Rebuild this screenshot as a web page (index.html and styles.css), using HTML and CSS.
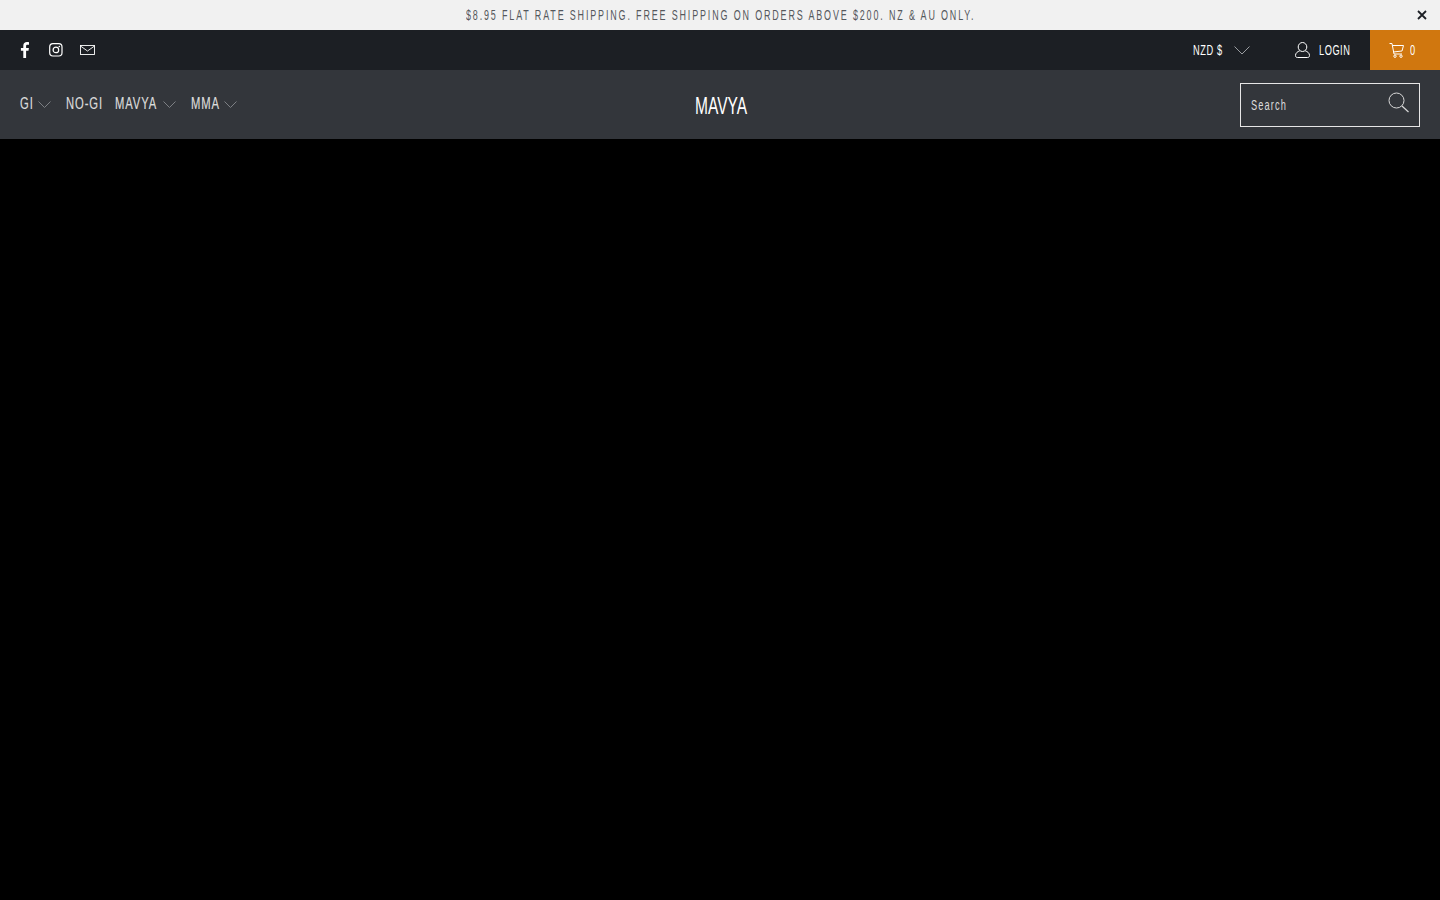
FILE: index.html
```html
<!DOCTYPE html>
<html lang="en">
<head>
    <meta charset="UTF-8">
    <title>Mavya</title>
    <meta name="viewport" content="width=device-width, initial-scale=1.0">
    <link rel="stylesheet" href="styles.css">
</head>
<body>
    <!-- Promo banner -->
    <div class="promo-banner">
        <p class="tall promo-text">$8.95 FLAT RATE SHIPPING. FREE SHIPPING ON ORDERS ABOVE $200. NZ &amp; AU ONLY.</p>
        <button class="promo-close" aria-label="Close">
            <svg width="10" height="10" viewBox="0 0 10 10"><path d="M1 1l8 8M9 1l-8 8" stroke="#1d2025" stroke-width="1.800" fill="none"/></svg>
        </button>
    </div>

    <!-- Top bar -->
    <div class="top-bar">
        <div class="social-icons">
            <a href="#" aria-label="Facebook">
                <svg width="12" height="16" viewBox=".7 0 12 16"><path d="M6.800 16V8.800h2.400l.4-2.800H6.800V4.200c0-.8.200-1.400 1.400-1.400h1.500V.3C9.400.2 8.600.1 7.600.1 5.500.1 4 1.400 4 3.800V6H1.600v2.800H4V16z" fill="#fff"/></svg>
            </a>
            <a href="#" aria-label="Instagram">
                <svg width="14" height="14" viewBox="0 0 14 14" fill="none" stroke="#fff"><rect x=".7" y=".7" width="12.300" height="12.300" rx="3.200" stroke-width="1.200"/><circle cx="6.900" cy="6.900" r="2.800" stroke-width="1.200"/><circle cx="10.300" cy="3.500" r=".8" fill="#fff" stroke="none"/></svg>
            </a>
            <a href="#" aria-label="Email">
                <svg width="15" height="10" viewBox="0 0 15 10" fill="none" stroke="#fff" stroke-width=".9"><rect x=".5" y=".5" width="14" height="9"/><path d="M.5 1l7 5 7-5"/></svg>
            </a>
        </div>
        <div class="top-actions">
            <a href="#" class="currency">
                <span class="tall currency-text">NZD $</span>
                <svg width="16" height="9" viewBox="0 0 16 9"><path d="M.5 .5L8 8l7.500-7.500" fill="none" stroke="#9a9da1"/></svg>
            </a>
            <a href="#" class="login">
                <svg width="15" height="16" viewBox="0 0 15 16" fill="none" stroke="#fff" stroke-width="1"><ellipse cx="7.500" cy="5" rx="4.300" ry="4.500"/><path d="M4.800 8.800C2.500 9.600.5 11 .5 13.500c0 1.300.7 2 2 2h10c1.300 0 2-.7 2-2 0-2.500-2-3.900-4.300-4.700"/></svg>
                <span class="tall login-text">LOGIN</span>
            </a>
            <a href="#" class="cart">
                <svg width="15" height="15" viewBox="0 0 15 15" fill="none" stroke="#fff" stroke-width="1"><path d="M.5 .5h2.500L5 11h8M3.400 2.500H14.500L13 8l-8.700 1"/><circle cx="6" cy="13.200" r="1.200"/><circle cx="12" cy="13.200" r="1.200"/></svg>
                <span class="tall cart-text">0</span>
            </a>
        </div>
    </div>

    <!-- Main nav -->
    <div class="main-nav">
        <ul class="nav-links">
            <li><a href="#"><span class="tall nav-gi">GI</span> <svg width="13" height="7" viewBox="0 0 13 7"><path d="M.5 .5l6 6 6-6" fill="none" stroke="#7d8084"/></svg></a></li>
            <li><a href="#"><span class="tall nav-nogi">NO-GI</span></a></li>
            <li><a href="#"><span class="tall nav-mavya">MAVYA</span> <svg width="13" height="7" viewBox="0 0 13 7"><path d="M.5 .5l6 6 6-6" fill="none" stroke="#7d8084"/></svg></a></li>
            <li><a href="#"><span class="tall nav-mma">MMA</span> <svg width="13" height="7" viewBox="0 0 13 7"><path d="M.5 .5l6 6 6-6" fill="none" stroke="#7d8084"/></svg></a></li>
        </ul>
        <a href="#" class="logo"><span class="tall logo-text">MAVYA</span></a>
        <form class="search-box">
            <input type="text" placeholder="Search">
            <svg width="21" height="21" viewBox="0 0 21 21" fill="none" stroke="#d8d8d8" stroke-width="1"><circle cx="8.500" cy="8.500" r="7.500"/><path d="M14 14l6.500 6" stroke-width="1.200"/></svg>
        </form>
    </div>

    <!-- Hero (empty video area) -->
    <div class="hero"></div>
</body>
</html>
```

FILE: styles.css
```css
body {
    margin: 0;
    font-family: "Liberation Sans", Arial, sans-serif;
    background: #000;
    height: 900px;
    overflow: hidden;
}
a { color: inherit; text-decoration: none; }

/* no condensed font installed, so squeeze the text sideways */
.tall {
    display: inline-block;
    white-space: nowrap;
    transform: scaleX(.66);
    transform-origin: left center;
}

.promo-banner {
    height: 30px;
    background: #f1f1f1;
    display: flex;
    align-items: center;
    justify-content: center;
    position: relative;
}
.promo-text {
    margin: 0;
    width: 509px;
    font-size: 14px;
    letter-spacing: 2.890px;
    color: #55585c;
    transform: scaleX(.64);
}
.promo-close {
    position: absolute;
    right: 13.500px;
    top: 10px;
    padding: 0;
    border: none;
    background: none;
    line-height: 0;
}

.top-bar {
    height: 40px;
    background: #1c1f24;
    display: flex;
    justify-content: space-between;
    align-items: center;
    padding-left: 20px;
    color: #fff;
}
.social-icons {
    display: flex;
    align-items: center;
    gap: 17px;
}
.social-icons a { display: flex; }
.top-actions {
    display: flex;
    align-items: center;
    height: 100%;
}
.currency {
    display: flex;
    align-items: center;
    gap: 11px;
    font-size: 14px;
    margin-right: 45px;
}
.currency-text { width: 30px; letter-spacing: .9px; }
.login {
    display: flex;
    align-items: center;
    gap: 9px;
    font-size: 14px;
    margin-right: 20px;
}
.login-text { width: 31px; letter-spacing: .8px; }
.cart {
    width: 50px;
    height: 100%;
    padding-left: 20px;
    background: #d0770f;
    display: flex;
    align-items: center;
    gap: 5px;
    font-size: 14px;
}
.cart svg { margin-left: -1px; }
.cart-text { width: 6px; margin-left: 1px; }

.main-nav {
    height: 69px;
    background: #33363b;
    display: grid;
    grid-template-columns: 1fr auto 1fr;
    align-items: center;
    padding: 0 20px;
    color: #dcdcdc;
}
.nav-links {
    display: flex;
    gap: 15px;
    list-style: none;
    margin: 0 0 1px;
    padding: 0;
    font-size: 17px;
}
.nav-links a {
    display: flex;
    align-items: center;
    gap: 6px;
}
.nav-gi, .nav-nogi, .nav-mavya, .nav-mma {
    letter-spacing: 1.400px;
    -webkit-text-stroke: .2px #dcdcdc;
}
.nav-gi { width: 12px; }
.nav-nogi { width: 34px; }
.nav-mavya { width: 42px; }
.nav-mma { width: 27px; }
.logo {
    display: flex;
    margin: 2px 0 0 1px;
    font-size: 24.500px;
    color: #fff;
}
.logo-text { width: 52px; transform: scaleX(.634); }
.search-box {
    justify-self: end;
    width: 180px;
    height: 44px;
    box-sizing: border-box;
    border: 1px solid #e6e6e6;
    display: flex;
    align-items: center;
    justify-content: space-between;
    padding: 0 10px;
}
.search-box svg { margin-top: -4px; }
.search-box input {
    width: 120px;
    padding: 0;
    border: none;
    outline: none;
    background: none;
    font-family: inherit;
    font-size: 14px;
    letter-spacing: 1.700px;
    color: #dcdcdc;
    transform: scaleX(.66);
    transform-origin: left center;
}
.search-box input::placeholder { color: #dcdcdc; opacity: 1; }

.hero { height: 761px; background: #000; }
```
